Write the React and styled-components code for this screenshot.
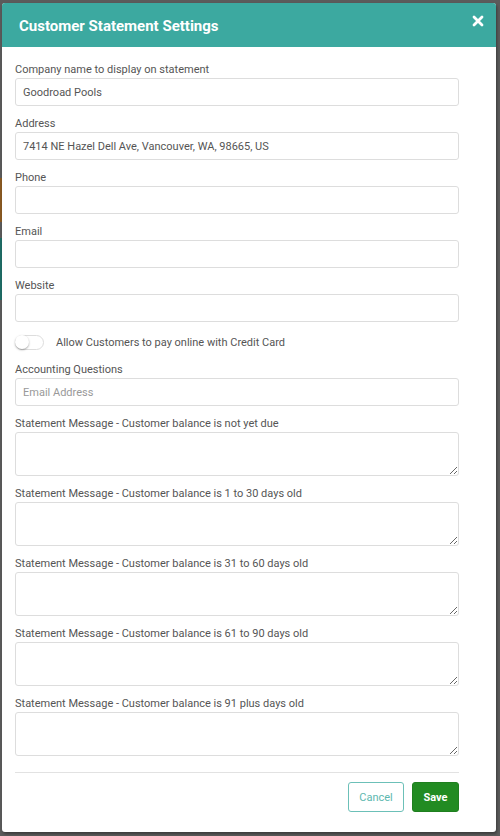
import React, { useState } from "react"
import styled, { createGlobalStyle } from "styled-components"

const GlobalStyle = createGlobalStyle`
  html, body {
    margin: 0;
    padding: 0;
    background: #5b5b5b;
    font-family: Roboto, "Liberation Sans", Arial, sans-serif;
  }
  * { box-sizing: border-box; }
`

const Backdrop = styled.div`
  width: 500px;
  height: 836px;
  padding: 3px 4px 4px 2px;
  background:
    linear-gradient(to bottom,
      #5b5b5b 0, #5b5b5b 178px,
      #8a5a22 178px, #8a5a22 222px,
      #5b5b5b 222px, #5b5b5b 238px,
      #1f6d66 238px, #1f6d66 300px,
      #5b5b5b 300px) left / 2px 100% no-repeat,
    #5b5b5b;
`

const Modal = styled.div`
  width: 494px;
  height: 829px;
  background: #fff;
  border-radius: 3px;
  box-shadow: 1px 2px 3px rgba(0, 0, 0, 0.35);
  display: flex;
  flex-direction: column;
  overflow: hidden;
`

const Header = styled.div`
  height: 44px;
  background: #3ca9a0;
  display: flex;
  align-items: center;
  justify-content: space-between;
  padding: 0 12px 0 17px;
  h1 {
    margin: 0;
    font-size: 15px;
    font-weight: 700;
    color: #fff;
    margin-top: 1px;
  }
`

const Close = styled.button`
  border: none;
  background: none;
  color: #fff;
  padding: 0;
  margin-top: -9px;
  cursor: pointer;
  display: flex;
`

const Body = styled.div`
  padding: 15px 37px 0 13px;
  display: flex;
  flex-direction: column;
`

const Field = styled.div`
  display: flex;
  flex-direction: column;
  margin-bottom: 10px;
`

const Label = styled.label`
  font-size: 11px;
  line-height: 15px;
  color: #555;
  margin-bottom: 1px;
`

const Input = styled.input`
  height: 28px;
  width: 100%;
  border: 1px solid #ddd;
  border-radius: 3px;
  padding: 0 7px;
  font-family: Roboto, "Liberation Sans", Arial, sans-serif;
  font-size: 11px;
  color: #555;
  outline: none;
  &::placeholder { color: #999; }
`

const TextArea = styled.textarea`
  height: 44px;
  width: 100%;
  border: 1px solid #ddd;
  border-radius: 3px;
  padding: 5px 7px;
  font-family: Roboto, "Liberation Sans", Arial, sans-serif;
  font-size: 11px;
  color: #555;
  outline: none;
  display: block;
`

const ToggleRow = styled.div`
  display: flex;
  align-items: center;
  gap: 12px;
  height: 22px;
  margin: -1px 0 9px 0;
  span {
    font-size: 11px;
    color: #555;
  }
`

const Switch = styled.div`
  width: 29px;
  height: 15px;
  border-radius: 8px;
  border: 1px solid #ddd;
  background: ${props => props.on ? "#3ca9a0" : "#fff"};
  display: flex;
  align-items: center;
  justify-content: ${props => props.on ? "flex-end" : "flex-start"};
  cursor: pointer;
  div {
    width: 14px;
    height: 14px;
    border-radius: 50%;
    background: #fff;
    box-shadow: 0 1px 2px rgba(0, 0, 0, 0.35);
    margin-left: -1px;
  }
`

const Footer = styled.div`
  margin: 6px 37px 0 13px;
  border-top: 1px solid #e2e2e2;
  padding-top: 9px;
  display: flex;
  justify-content: flex-end;
  gap: 8px;
`

const Cancel = styled.button`
  width: 56px;
  height: 30px;
  background: #fff;
  border: 1px solid #6cc0b8;
  border-radius: 3px;
  color: #5cb8af;
  font-family: Roboto, "Liberation Sans", Arial, sans-serif;
  font-size: 11px;
  cursor: pointer;
`

const Save = styled.button`
  width: 47px;
  height: 30px;
  background: #228b22;
  border: 1px solid #1f7f1f;
  border-radius: 3px;
  color: #fff;
  font-family: Roboto, "Liberation Sans", Arial, sans-serif;
  font-size: 11px;
  font-weight: 700;
  cursor: pointer;
`

const messages = [
  "not yet due",
  "1 to 30 days old",
  "31 to 60 days old",
  "61 to 90 days old",
  "91 plus days old",
]

export default function App() {
  const [online, setOnline] = useState(false)

  return (
    <>
      <GlobalStyle />
      <Backdrop>
        <Modal>
          <Header>
            <h1>Customer Statement Settings</h1>
            <Close>
              <svg width="12" height="12" viewBox="0 0 12 12">
                <path d="M2 2 L10 10 M10 2 L2 10" stroke="#fff" strokeWidth="2.8" strokeLinecap="round" />
              </svg>
            </Close>
          </Header>
          <Body>
            <Field>
              <Label>Company name to display on statement</Label>
              <Input defaultValue="Goodroad Pools" />
            </Field>
            <Field>
              <Label>Address</Label>
              <Input defaultValue="7414 NE Hazel Dell Ave, Vancouver, WA, 98665, US" />
            </Field>
            <Field>
              <Label>Phone</Label>
              <Input />
            </Field>
            <Field>
              <Label>Email</Label>
              <Input />
            </Field>
            <Field>
              <Label>Website</Label>
              <Input />
            </Field>
            <ToggleRow>
              <Switch on={online} onClick={() => setOnline(!online)}>
                <div />
              </Switch>
              <span>Allow Customers to pay online with Credit Card</span>
            </ToggleRow>
            <Field>
              <Label>Accounting Questions</Label>
              <Input placeholder="Email Address" />
            </Field>
            {messages.map(m => (
              <Field key={m}>
                <Label>Statement Message - Customer balance is {m}</Label>
                <TextArea />
              </Field>
            ))}
          </Body>
          <Footer>
            <Cancel>Cancel</Cancel>
            <Save>Save</Save>
          </Footer>
        </Modal>
      </Backdrop>
    </>
  )
}
